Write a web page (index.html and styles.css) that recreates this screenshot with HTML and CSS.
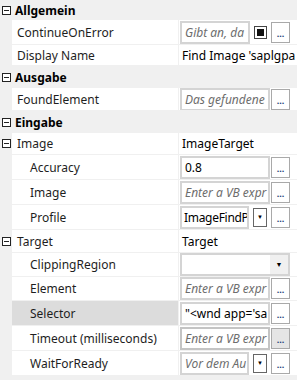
FILE: index.html
```html
<!DOCTYPE html>
<html lang="de">
<head>
<meta charset="UTF-8" />
<title>Eigenschaften</title>
<link rel="stylesheet" href="styles.css">
</head>
<body>

<div class="grid">
  <div class="cat h20"><span class="gutter"><i class="exp"></i></span><span class="cat-label">Allgemein</span></div>

  <div class="row h25">
    <span class="gutter"></span>
    <span class="name">ContinueOnError</span>
    <span class="val">
      <span class="box ph">Gibt an, da</span>
      <span class="chk"><i></i></span>
      <span class="btn">...</span>
    </span>
  </div>
  <div class="row h21">
    <span class="gutter"></span>
    <span class="name">Display Name</span>
    <span class="val plain"><span class="text">Find Image 'saplgpa</span></span>
  </div>

  <div class="cat h22"><span class="gutter"><i class="exp"></i></span><span class="cat-label">Ausgabe</span></div>

  <div class="row h23">
    <span class="gutter"></span>
    <span class="name">FoundElement</span>
    <span class="val">
      <span class="box ph">Das gefundene</span>
      <span class="btn">...</span>
    </span>
  </div>

  <div class="cat h22"><span class="gutter"><i class="exp"></i></span><span class="cat-label">Eingabe</span></div>

  <div class="row h22">
    <span class="gutter"><i class="exp"></i></span>
    <span class="name">Image</span>
    <span class="val plain"><span class="text">ImageTarget</span></span>
  </div>
  <div class="row h25">
    <span class="gutter"></span>
    <span class="name sub">Accuracy</span>
    <span class="val">
      <span class="box">0.8</span>
      <span class="btn">...</span>
    </span>
  </div>
  <div class="row h25">
    <span class="gutter"></span>
    <span class="name sub">Image</span>
    <span class="val">
      <span class="box ph">Enter a VB expr</span>
      <span class="btn">...</span>
    </span>
  </div>
  <div class="row h25">
    <span class="gutter"></span>
    <span class="name sub">Profile</span>
    <span class="val">
      <span class="box tight">ImageFindP</span>
      <span class="drop">&#9660;</span>
      <span class="btn">...</span>
    </span>
  </div>

  <div class="row h23">
    <span class="gutter"><i class="exp"></i></span>
    <span class="name">Target</span>
    <span class="val plain"><span class="text">Target</span></span>
  </div>
  <div class="row h24">
    <span class="gutter"></span>
    <span class="name sub">ClippingRegion</span>
    <span class="val">
      <span class="combo"><span class="combo-text"></span><span class="combo-arrow">&#9660;</span></span>
    </span>
  </div>
  <div class="row h24">
    <span class="gutter"></span>
    <span class="name sub">Element</span>
    <span class="val">
      <span class="box ph">Enter a VB expr</span>
      <span class="btn">...</span>
    </span>
  </div>
  <div class="row h25 selected">
    <span class="gutter"></span>
    <span class="name sub">Selector</span>
    <span class="val">
      <span class="box">"&lt;wnd app='sa</span>
      <span class="btn">...</span>
    </span>
  </div>
  <div class="row h25">
    <span class="gutter"></span>
    <span class="name sub">Timeout (milliseconds)</span>
    <span class="val">
      <span class="box ph hover">Enter a VB expr</span>
      <span class="btn hover">...</span>
    </span>
  </div>
  <div class="row h25">
    <span class="gutter"></span>
    <span class="name sub">WaitForReady</span>
    <span class="val">
      <span class="box ph">Vor dem Au</span>
      <span class="drop">&#9660;</span>
      <span class="btn">...</span>
    </span>
  </div>
</div>

</body>
</html>
```

FILE: styles.css
```css
body {
  margin: 0;
  background: #f0f0f0;
  font-family: "Noto Sans", "Open Sans", sans-serif;
  font-size: 12px;
  color: #1e1e1e;
}
.grid {
  width: 297px;
}
.h20 { height: 20px; }
.h21 { height: 21px; }
.h22 { height: 22px; }
.h23 { height: 23px; }
.h24 { height: 24px; }
.h25 { height: 25px; }

.cat,
.row {
  display: flex;
  box-sizing: border-box;
  align-items: stretch;
}
.cat {
  background: #f0f0f0;
}
.row {
  background: #fff;
  border-bottom: 1px solid #f0f0f0;
}
.gutter {
  width: 12px;
  flex: none;
  background: #f0f0f0;
  display: flex;
  align-items: center;
}
.exp {
  position: relative;
  display: block;
  width: 7px;
  height: 7px;
  margin-left: 2px;
  border: 1px solid #222;
  background: #fff;
}
.exp::after {
  content: "";
  position: absolute;
  left: 1px;
  top: 3px;
  width: 5px;
  height: 1px;
  background: #222;
}
.cat-label {
  padding-left: 3px;
  font-weight: bold;
  display: flex;
  align-items: center;
  color: #000;
}
.name {
  width: 167px;
  flex: none;
  box-sizing: border-box;
  padding-left: 5px;
  border-right: 1px solid #f0f0f0;
  display: flex;
  align-items: center;
  white-space: nowrap;
  overflow: hidden;
}
.name.sub {
  padding-left: 18px;
}
.selected .name {
  background: #dcdcdc;
}
.val {
  flex: 1;
  min-width: 0;
  display: flex;
  align-items: center;
  padding: 0 7px 0 1px;
  overflow: hidden;
}
.val.plain {
  padding-right: 0;
}
.text {
  padding-left: 2px;
  white-space: nowrap;
  color: #000;
}
.box {
  flex: 1;
  min-width: 0;
  height: 23px;
  box-sizing: border-box;
  border: 2px solid #d4d4d4;
  background: #fff;
  padding-left: 3px;
  display: flex;
  align-items: center;
  white-space: nowrap;
  overflow: hidden;
  color: #000;
}
.box.tight {
  padding-left: 2px;
  letter-spacing: -0.3px;
}
.box.ph {
  font-style: italic;
  color: #6d6d6d;
}
.box.hover {
  border-color: #c4c4c4;
}
.btn {
  flex: none;
  width: 19px;
  height: 21px;
  margin-left: 1px;
  box-sizing: border-box;
  border: 1px solid #a9a9a9;
  background: #fff;
  color: #1c3c78;
  font-size: 9px;
  font-weight: bold;
  text-align: center;
  line-height: 22px;
}
.btn.hover {
  background: #e5e5e5;
}
.chk,
.drop {
  flex: none;
  box-sizing: border-box;
  margin: 0 3px 0 4px;
}
.chk {
  width: 13px;
  height: 13px;
  border: 1px solid #444;
  padding: 2px;
}
.chk i {
  display: block;
  width: 7px;
  height: 7px;
  background: #111;
}
.drop {
  width: 14px;
  height: 19px;
  border: 1px solid #666;
  background: #fff;
  font-size: 6px;
  line-height: 17px;
  text-align: center;
  color: #000;
}
.combo {
  flex: 1;
  height: 23px;
  box-sizing: border-box;
  border: 2px solid #d4d4d4;
  background: #fff;
  display: flex;
}
.combo-text {
  flex: 1;
}
.combo-arrow {
  width: 18px;
  background: #f0f0f0;
  font-size: 7px;
  line-height: 19px;
  text-align: center;
  color: #000;
}
```
